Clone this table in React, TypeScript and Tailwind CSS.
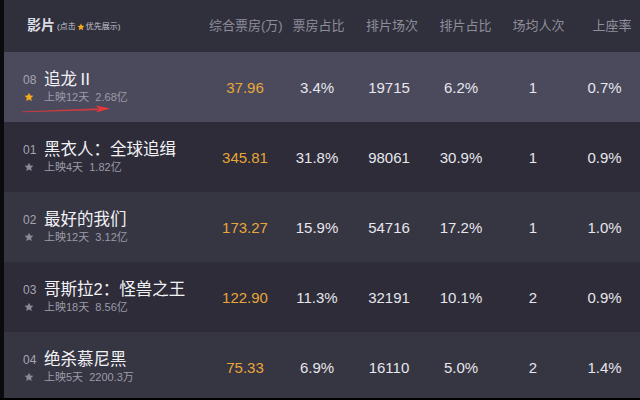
const rows = [
  { rank: "08", title: "追龙Ⅱ", sub: "上映12天  2.68亿", fav: true, vals: ["37.96", "3.4%", "19715", "6.2%", "1", "0.7%"] },
  { rank: "01", title: "黑衣人：全球追缉", sub: "上映4天  1.82亿", fav: false, vals: ["345.81", "31.8%", "98061", "30.9%", "1", "0.9%"] },
  { rank: "02", title: "最好的我们", sub: "上映12天  3.12亿", fav: false, vals: ["173.27", "15.9%", "54716", "17.2%", "1", "1.0%"] },
  { rank: "03", title: "哥斯拉2：怪兽之王", sub: "上映18天  8.56亿", fav: false, vals: ["122.90", "11.3%", "32191", "10.1%", "2", "0.9%"] },
  { rank: "04", title: "绝杀慕尼黑", sub: "上映5天  2200.3万", fav: false, vals: ["75.33", "6.9%", "16110", "5.0%", "2", "1.4%"] },
];

const headers = ["综合票房(万)", "票房占比", "排片场次", "排片占比", "场均人次", "上座率"];

function Star(props: { className: string; size: number }) {
  return (
    <svg width={props.size} height={props.size} viewBox="0 0 24 24" className={props.className}>
      <path fill="currentColor" d="M12 1.5l3.2 7 7.3.7-5.5 5 1.6 7.4L12 17.8l-6.6 3.8L7 14.2l-5.5-5 7.3-.7z" />
    </svg>
  );
}

export default function App() {
  return (
    <div
      className="w-[640px] h-[400px] overflow-hidden flex bg-[#0b0b0f] border-b-2 border-black"
      style={{ fontFamily: '"Liberation Sans", "Noto Sans CJK SC", sans-serif' }}
    >
      <div className="w-[4px] shrink-0 bg-[#0b0b0f]" />
      <div className="flex-1 flex flex-col relative">
        <div className="h-[52px] shrink-0 bg-[#30303c] grid grid-cols-[205px_73px_73px_74px_73px_73px_74px] items-center">
          <div className="flex items-end pl-[23px] pb-[2px]">
            <span className="text-[14px] font-bold text-[#dcdce4] leading-none">影片</span>
            <span className="text-[8px] text-[#c4c4cc] leading-none ml-[2px] flex items-center pb-[1px]">
              (点击<Star size={8} className="text-[#f0a81e] mx-[1px]" />优先展示)
            </span>
          </div>
          {headers.map((h) => (
            <div key={h} className="text-center text-[13px] text-[#8e8d9a] whitespace-nowrap">
              {h}
            </div>
          ))}
        </div>
        {rows.map((r, i) => (
          <div
            key={r.rank}
            className={
              "h-[70px] shrink-0 grid grid-cols-[205px_72px_72px_72px_72px_72px_71px] items-center " +
              (i === 0 ? "bg-[#4b4a5c]" : i % 2 === 1 ? "bg-[#2d2c38]" : "bg-[#363542]")
            }
          >
            <div className="pl-[19px] flex flex-col">
              <div className="flex items-center h-[20px]">
                <span className="w-[21px] text-[12px] text-[#a6a5b2]">{r.rank}</span>
                <span className="text-[16.5px] text-[#f2f2f6] whitespace-nowrap">{r.title}</span>
              </div>
              <div className="flex items-center h-[15px]">
                <span className="w-[21px] pl-[1px] flex">
                  <Star size={10} className={r.fav ? "text-[#f4aa1c]" : "text-[#8a8995]"} />
                </span>
                <span className="text-[11px] text-[#9c9ba8] whitespace-pre">{r.sub}</span>
              </div>
            </div>
            {r.vals.map((v, j) => (
              <div
                key={j}
                className={"text-center text-[15px] pt-[3px] " + (j === 0 ? "text-[#e8a63a]" : "text-[#e6e6ec]")}
              >
                {v}
              </div>
            ))}
          </div>
        ))}
        <svg className="absolute left-[16px] top-[103px]" width="92" height="12" viewBox="0 0 92 12">
          <polygon points="2,8.5 78,5.2 78,7.2 2,9.3" fill="#e23a3c" opacity="0.85" />
          <polygon points="76,2.5 90,5.5 76,9.5 79,6" fill="#e8383a" />
        </svg>
      </div>
    </div>
  );
}
